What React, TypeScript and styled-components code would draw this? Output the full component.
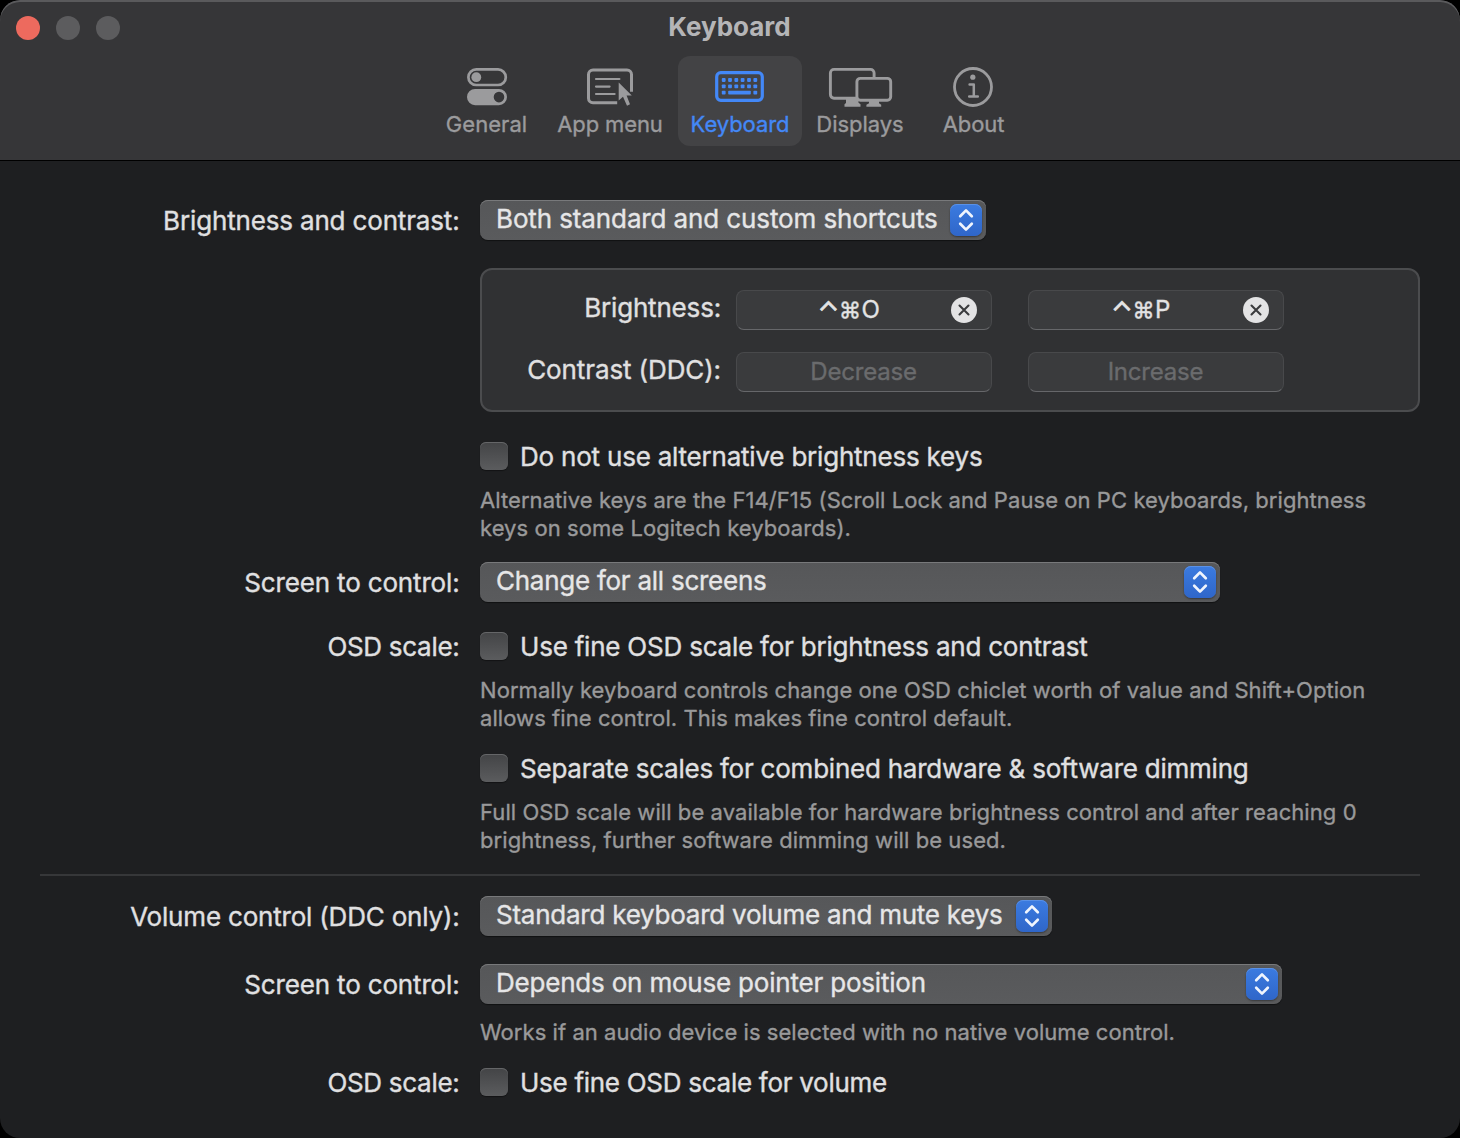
import React from "react";
import styled, { createGlobalStyle } from "styled-components";

const GlobalStyle = createGlobalStyle`
  *, *::before, *::after { box-sizing: border-box; }
  html, body { margin: 0; background: #000; }
  body { font-family: Inter, "Liberation Sans", sans-serif; font-size: 26px; color: #e0e0e1; }
`;

const Window = styled.div`
  width: 1460px;
  height: 1138px;
  display: flex;
  flex-direction: column;
  background: #1e1f21;
  border-radius: 20px;
  overflow: hidden;
`;

const Header = styled.header`
  position: relative;
  height: 161px;
  background: #363638;
  border-bottom: 1px solid #000;
  box-shadow: inset 0 2px 0 #5a5a5c;
  border-radius: 20px 20px 0 0;
`;

const TrafficLights = styled.div`
  position: absolute;
  top: 16px;
  left: 16px;
  display: flex;
  gap: 16px;
`;

const Light = styled.span<{ $color: string }>`
  width: 24px;
  height: 24px;
  border-radius: 50%;
  background: ${(p) => p.$color};
`;

const Title = styled.h1`
  margin: 0;
  padding: 11px 1px 0 0;
  height: 56px;
  text-align: center;
  font-size: 26px;
  line-height: 32px;
  font-weight: 700;
  letter-spacing: 0;
  color: #b5b5b7;
`;

const Toolbar = styled.nav`
  display: flex;
  justify-content: center;
  gap: 4px;
`;

const Tab = styled.div<{ $width: number; $selected?: boolean; $track: number }>`
  width: ${(p) => p.$width}px;
  height: 90px;
  padding-top: 6px;
  display: flex;
  flex-direction: column;
  align-items: center;
  border-radius: 12px;
  background: ${(p) => (p.$selected ? "#434345" : "transparent")};
  color: ${(p) => (p.$selected ? "#4388f7" : "#9b9b9d")};
  font-size: 22px;
  line-height: 28px;
  letter-spacing: ${(p) => p.$track}px;
  white-space: nowrap;
  -webkit-text-stroke: 0.35px currentColor;

  svg {
    display: block;
    margin-bottom: -2px;
  }
`;

const Content = styled.main`
  display: flex;
  flex-direction: column;
  padding: 39px 40px 0;
`;

const FormRow = styled.div<{ $top?: number }>`
  display: grid;
  grid-template-columns: 420px 940px;
  column-gap: 20px;
  margin-top: ${(p) => p.$top ?? 0}px;
`;

const Label = styled.div<{ $height: number; $track?: number }>`
  height: ${(p) => p.$height}px;
  padding-right: 0.5px;
  line-height: ${(p) => p.$height + 2}px;
  text-align: right;
  white-space: nowrap;
  letter-spacing: ${(p) => p.$track ?? -0.16}px;
  -webkit-text-stroke: 0.35px currentColor;
`;

const Field = styled.div`
  grid-column: 2;
`;

const SelectBox = styled.div<{ $width: number; $track: number }>`
  width: ${(p) => p.$width}px;
  height: 40px;
  padding: 0 4px 0 16px;
  display: flex;
  align-items: center;
  justify-content: space-between;
  border-radius: 8px;
  background: linear-gradient(#565759, #5a5b5d);
  box-shadow: inset 0 1px 0 #78797b, 0 1px 1px rgba(0, 0, 0, 0.45);
  letter-spacing: ${(p) => p.$track}px;
  color: #e6e6e7;
  -webkit-text-stroke: 0.35px currentColor;
`;

const SelectText = styled.span`
  height: 40px;
  line-height: 38px;
  white-space: nowrap;
`;

const Stepper = styled.span`
  width: 32px;
  height: 32px;
  border-radius: 7px;
  background: linear-gradient(#3b7be0, #2f66c9);
  box-shadow: inset 0 1px 0 #5a91e6, 0 1px 2px rgba(0, 0, 0, 0.4);

  svg {
    display: block;
  }
`;

const CheckRow = styled.label<{ $track: number }>`
  display: flex;
  align-items: center;
  gap: 12px;
  height: 28px;
  letter-spacing: ${(p) => p.$track}px;
  white-space: nowrap;
  -webkit-text-stroke: 0.35px currentColor;
`;

const CheckBox = styled.span`
  width: 28px;
  height: 28px;
  border-radius: 6px;
  background: linear-gradient(#434446, #5b5c5e);
  box-shadow: inset 0 1px 0 #656668, 0 1px 1px rgba(0, 0, 0, 0.4);
`;

const CheckText = styled.span`
  height: 28px;
  line-height: 30px;
`;

const Note = styled.p<{ $top?: number; $track?: number }>`
  margin: ${(p) => p.$top ?? 16}px 0 0;
  font-size: 22px;
  line-height: 28px;
  letter-spacing: ${(p) => p.$track ?? 0.068}px;
  color: #99999a;
  -webkit-text-stroke: 0.35px currentColor;
`;

const Panel = styled.section`
  width: 940px;
  height: 144px;
  padding: 20px 0 0;
  display: grid;
  grid-template-columns: 239px 256px 256px;
  grid-auto-rows: 40px;
  row-gap: 22px;
  border: 2px solid #4b4c4e;
  border-radius: 12px;
  background: #303133;
`;

const PanelLabel = styled.div<{ $track: number }>`
  height: 36px;
  line-height: 36px;
  text-align: right;
  letter-spacing: ${(p) => p.$track}px;
  white-space: nowrap;
  -webkit-text-stroke: 0.35px currentColor;
`;

const KeyField = styled.div<{ $empty?: boolean; $second?: boolean }>`
  margin-left: ${(p) => (p.$second ? 51 : 15)}px;
  width: 256px;
  height: 40px;
  padding-right: ${(p) => (p.$empty ? 1 : 14)}px;
  display: flex;
  align-items: center;
  border-radius: 8px;
  border: 1px solid #48494b;
  border-bottom-color: #66676a;
  background: #3a3b3d;
  font-size: 24px;
  letter-spacing: -0.2px;
  color: ${(p) => (p.$empty ? "#6a6b6d" : "#e3e3e4")};
  -webkit-text-stroke: 0.35px currentColor;
`;

const KeyText = styled.span<{ $empty?: boolean }>`
  flex: 1;
  display: flex;
  align-items: center;
  justify-content: center;
  height: 38px;
  line-height: 38px;
  padding-left: ${(p) => (p.$empty ? 0 : 9)}px;
`;

const Caret = styled.span`
  padding-top: 3px;
  font-size: 28px;
  -webkit-text-stroke: 0.6px currentColor;
`;

const Command = styled.span`
  margin: 0 0.5px 0 0;
  font-size: 22px;
`;

const Divider = styled.hr`
  width: 1380px;
  height: 2px;
  margin: 20px 0;
  border: 0;
  background: #363739;
`;

const GeneralIcon = () => (
  <svg width="64" height="50" viewBox="455 62 64 50" fill="currentColor">
    <rect x="468.4" y="69.4" width="37.4" height="15.6" rx="7.8" fill="none" stroke="currentColor" strokeWidth="2.7" />
    <circle cx="476.3" cy="77.2" r="4.9" />
    <path fillRule="evenodd" d="M475.1 89h23.8a8 8 0 0 1 0 16.2h-23.8a8 8 0 0 1 0-16.2ZM499 91.8a5.3 5.3 0 1 0 0 10.6 5.3 5.3 0 0 0 0-10.6Z" />
  </svg>
);

const AppMenuIcon = () => (
  <svg width="64" height="50" viewBox="578 62 64 50" fill="none" stroke="currentColor">
    <path strokeWidth="3" d="M617.2 102.8H593a4.5 4.5 0 0 1-4.5-4.5V74.6a4.5 4.5 0 0 1 4.5-4.5h34a4.5 4.5 0 0 1 4.5 4.5V91.8" />
    <path strokeWidth="2.2" strokeLinecap="round" d="M596 79h23.4M596 86.6h13.6M596 94h18.6" />
    <path fill="currentColor" stroke="none" d="M618.7 82.6 631.8 95.4H626.6L630 104.3 627 105.7 623 96.8 618.7 100.6Z" />
  </svg>
);

const KeyboardIcon = () => (
  <svg width="64" height="50" viewBox="708 62 64 50" fill="currentColor">
    <rect x="716.7" y="72.7" width="45.6" height="27.6" rx="4" fill="none" stroke="currentColor" strokeWidth="3.2" />
    {[80, 86.3].map((y) =>
      [723.7, 730, 736.3, 742.6, 749, 755.3].map((x) => <rect key={`${x}-${y}`} x={x - 1.9} y={y - 1.9} width="3.8" height="3.8" rx="0.8" />)
    )}
    <rect x="721.8" y="90.8" width="3.8" height="3.8" rx="0.8" />
    <rect x="728.2" y="90.8" width="22.6" height="3.8" rx="0.8" />
    <rect x="753.4" y="90.8" width="3.8" height="3.8" rx="0.8" />
  </svg>
);

const DisplaysIcon = () => (
  <svg width="70" height="50" viewBox="825 62 70 50" fill="none" stroke="currentColor" strokeWidth="2.9">
    <path d="M856 98.2H834a3.6 3.6 0 0 1-3.6-3.6V73a3.6 3.6 0 0 1 3.6-3.6h36.5a3.6 3.6 0 0 1 3.6 3.6v5" />
    <rect x="856.9" y="78.4" width="33.8" height="21.8" rx="3.4" />
    <path fill="currentColor" stroke="none" d="M846 99h12.5v3.7l2 1.6v2.4h-16v-2.4l1.5-1.4ZM869 101h10v2.3l2.2 1.4v2h-14.8v-2l2.6-1.4Z" />
  </svg>
);

const AboutIcon = () => (
  <svg width="64" height="50" viewBox="942 62 64 50" fill="none" stroke="currentColor">
    <circle cx="973" cy="87" r="18.5" strokeWidth="2.8" />
    <circle cx="972.8" cy="77.2" r="2.6" fill="currentColor" stroke="none" />
    <path strokeWidth="2.5" strokeLinecap="round" strokeLinejoin="round" d="M969.6 84.6h4.2v11.8M969.2 96.5h8.6" />
  </svg>
);

const ClearIcon = () => (
  <svg width="26" height="26" viewBox="0 0 26 26">
    <circle cx="13" cy="13" r="13" fill="#e3e3e4" />
    <path d="M8.5 8.5l9 9M17.5 8.5l-9 9" stroke="#3a3b3d" strokeWidth="2.1" strokeLinecap="round" />
  </svg>
);

interface SelectProps {
  width: number;
  track: number;
  children: React.ReactNode;
}

const Select = ({ width, track, children }: SelectProps) => (
  <SelectBox $width={width} $track={track}>
    <SelectText>{children}</SelectText>
    <Stepper>
      <svg width="32" height="32" viewBox="0 0 32 32" fill="none" stroke="#f0f5fd" strokeWidth="2.7" strokeLinecap="round" strokeLinejoin="round">
        <path d="M10.2 12.2 16 6.4l5.8 5.8M10.2 19.8 16 25.6l5.8-5.8" />
      </svg>
    </Stepper>
  </SelectBox>
);

const Check = ({ track, children }: { track: number; children: React.ReactNode }) => (
  <CheckRow $track={track}>
    <CheckBox />
    <CheckText>{children}</CheckText>
  </CheckRow>
);

const Shortcut = ({ letter, second }: { letter: string; second?: boolean }) => (
  <KeyField $second={second}>
    <KeyText>
      <Caret>⌃</Caret>
      <Command>⌘</Command>
      <span>{letter}</span>
    </KeyText>
    <ClearIcon />
  </KeyField>
);

export default function App() {
  return (
    <>
      <GlobalStyle />
      <Window>
        <Header>
          <TrafficLights>
            <Light $color="#ed6a5e" />
            <Light $color="#5c5c5e" />
            <Light $color="#5c5c5e" />
          </TrafficLights>
          <Title>Keyboard</Title>
          <Toolbar>
            <Tab $width={111} $track={0.05}><GeneralIcon />General</Tab>
            <Tab $width={128} $track={-0.12}><AppMenuIcon />App menu</Tab>
            <Tab $width={124} $track={-0.06} $selected><KeyboardIcon />Keyboard</Tab>
            <Tab $width={108} $track={-0.04}><DisplaysIcon />Displays</Tab>
            <Tab $width={111} $track={-0.1}><AboutIcon />About</Tab>
          </Toolbar>
        </Header>
        <Content>
          <FormRow>
            <Label $height={40}>Brightness and contrast:</Label>
            <Select width={506} track={-0.115}>Both standard and custom shortcuts</Select>
          </FormRow>
          <FormRow $top={28}>
            <Field>
              <Panel>
                <PanelLabel $track={-0.18}>Brightness:</PanelLabel>
                <Shortcut letter="O" />
                <Shortcut letter="P" second />
                <PanelLabel $track={-0.1}>Contrast (DDC):</PanelLabel>
                <KeyField $empty><KeyText $empty>Decrease</KeyText></KeyField>
                <KeyField $empty $second><KeyText $empty>Increase</KeyText></KeyField>
              </Panel>
            </Field>
          </FormRow>
          <FormRow $top={30}>
            <Field>
              <Check track={-0.21}>Do not use alternative brightness keys</Check>
              <Note>Alternative keys are the F14/F15 (Scroll Lock and Pause on PC keyboards, brightness keys on some Logitech keyboards).</Note>
            </Field>
          </FormRow>
          <FormRow $top={20}>
            <Label $height={40}>Screen to control:</Label>
            <Select width={740} track={-0.258}>Change for all screens</Select>
          </FormRow>
          <FormRow $top={30}>
            <Label $height={28} $track={-0.29}>OSD scale:</Label>
            <Field>
              <Check track={-0.215}>Use fine OSD scale for brightness and contrast</Check>
              <Note>Normally keyboard controls change one OSD chiclet worth of value and Shift+Option allows fine control. This makes fine control default.</Note>
            </Field>
          </FormRow>
          <FormRow $top={22}>
            <Field>
              <Check track={-0.23}>Separate scales for combined hardware &amp; software dimming</Check>
              <Note $track={0.075}>Full OSD scale will be available for hardware brightness control and after reaching 0 brightness, further software dimming will be used.</Note>
            </Field>
          </FormRow>
          <Divider />
          <FormRow>
            <Label $height={40} $track={-0.191}>Volume control (DDC only):</Label>
            <Select width={572} track={-0.244}>Standard keyboard volume and mute keys</Select>
          </FormRow>
          <FormRow $top={28}>
            <Label $height={40}>Screen to control:</Label>
            <Field>
              <Select width={802} track={-0.2}>Depends on mouse pointer position</Select>
              <Note $top={14} $track={0.055}>Works if an audio device is selected with no native volume control.</Note>
            </Field>
          </FormRow>
          <FormRow $top={22}>
            <Label $height={28} $track={-0.29}>OSD scale:</Label>
            <Check track={-0.28}>Use fine OSD scale for volume</Check>
          </FormRow>
        </Content>
      </Window>
    </>
  );
}
